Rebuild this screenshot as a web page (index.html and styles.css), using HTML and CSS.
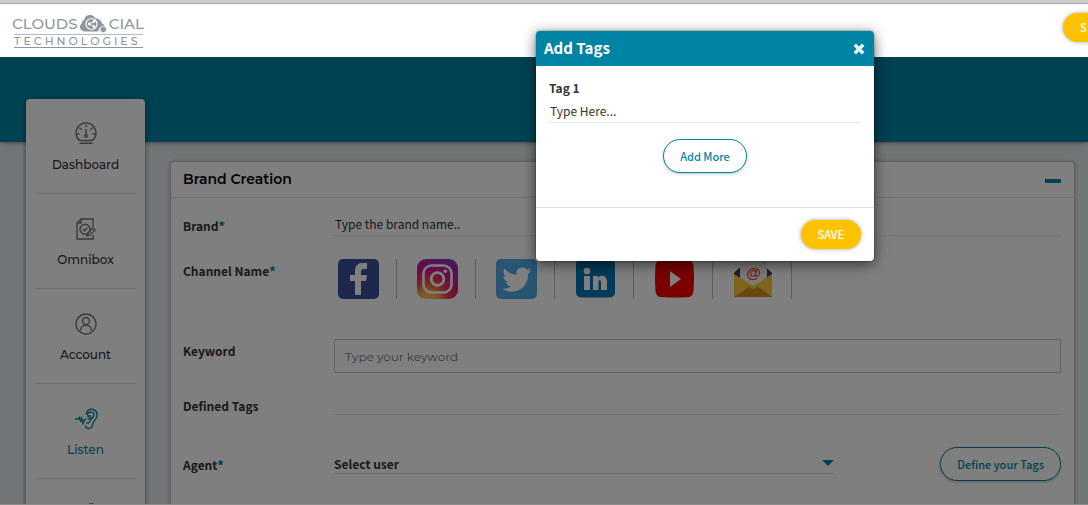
FILE: index.html
```html
<!DOCTYPE html>
<html lang="en">
<head>
<meta charset="utf-8">
<title>Brand Creation</title>
<link rel="stylesheet" href="styles.css">
</head>
<body>
<div class="page">
  <header class="topbar">
    <div class="logo">
      <div class="logo-main">
        <span>CLOUDS</span>
        <svg class="logo-cloud" viewBox="0 0 28 19" aria-hidden="true">
          <path d="M5 17.500A4.600 4.600 0 0 1 2.500 9.500A5 5 0 0 1 5.200 5.500A6 6 0 0 1 16.500 4.500A6 6 0 0 1 23 9.500A4.500 4.500 0 0 1 26 13L21 13.500L19 17.500Z" fill="#8f969d"/>
          <circle cx="12.500" cy="10" r="5.500" fill="#8f969d" stroke="#fff" stroke-width="1.200"/>
          <path d="M15 7.500L10.500 10L15 12.500" fill="none" stroke="#fff"/>
          <circle cx="15" cy="7.400" r="1.300" fill="#fff"/><circle cx="10.300" cy="10" r="1.400" fill="#fff"/><circle cx="15" cy="12.600" r="1.300" fill="#fff"/>
          <circle cx="24.300" cy="15.500" r="3.200" fill="#8f969d" stroke="#fff" stroke-width=".8"/>
        </svg>
        <span>CIAL</span>
      </div>
      <div class="logo-sub">TECHNOLOGIES</div>
    </div>
    <button class="btn btn-gold topbar-btn" type="button">S</button>
  </header>

  <div class="shell">
    <div class="banner"></div>
    <div class="columns">
      <nav class="sidebar">
        <a class="nav-item" href="#">
          <svg viewBox="0 0 22 22" aria-hidden="true"><path d="M4.500 17.500A10 10 0 1 1 17.500 17.500ZM4.500 20.300H17.500M11 1.500V4M1.500 11H4.500M17.500 11H20.500M4.500 4.800L6.500 6.800M17.500 4.800L15.500 6.800M11 6V12"/><circle cx="11" cy="13" r="1.400"/></svg>
          <span>Dashboard</span>
        </a>
        <a class="nav-item" href="#">
          <svg viewBox="0 0 22 22" aria-hidden="true"><path d="M18 9V1H6L2 5V21H18V17M2 5H6V1"/><circle cx="10" cy="11.300" r="5"/><path d="M8 11.300L9.500 12.700L12.300 9.800M12 18L13 15L18 10L20 12L15 17Z"/></svg>
          <span>Omnibox</span>
        </a>
        <a class="nav-item" href="#">
          <svg viewBox="0 0 22 22" aria-hidden="true"><circle cx="11" cy="11" r="10"/><circle cx="11" cy="8" r="3.500"/><path d="M5.500 17.500C5.500 10.500 16.500 10.500 16.500 17.500"/></svg>
          <span>Account</span>
        </a>
        <a class="nav-item active" href="#">
          <svg viewBox="0 0 22 22" aria-hidden="true"><path d="M0 11H3L4.200 9.500L5.500 13L6.500 10L8 15.500L9.500 11.500H11"/><path d="M11 6C12 2.500 14 1.200 16.500 1.200C20.500 1.200 22.500 4.500 22 8C21.500 11.500 18.500 12.500 18 15.500C17.500 18.500 16 20.500 13.500 20.500C11.500 20.500 10.500 19 10.500 17.500"/><path d="M12 7.500C12.500 5 14 4 16 4C18.800 4 19.500 6.500 18.300 9C17.300 11 15 11.500 14.500 13.500C14 15.500 12.500 15.500 11.500 14.500M12.500 9C14 7 16.500 7.500 15.500 9.500C14.500 11 13 10 13 11.500"/></svg>
          <span>Listen</span>
        </a>
        <a class="nav-item" href="#" aria-label="More">
          <svg viewBox="0 0 22 22" aria-hidden="true"><path d="M4 2H9V8H4ZM15 1H18V20H15ZM4 12H9V20H4Z"/></svg>
        </a>
      </nav>

      <main class="card">
        <div class="card-head">
          <h1>Brand Creation</h1>
          <button class="collapse" type="button" aria-label="Collapse"></button>
        </div>
        <form class="form">
          <div class="row row-brand">
            <label for="brand">Brand<b>*</b></label>
            <input class="line-input" id="brand" type="text" placeholder="Type the brand name..">
          </div>
          <div class="row row-channel">
            <span class="label">Channel Name<b>*</b></span>
            <div class="channels">
              <button type="button" aria-label="Facebook"><svg viewBox="0 0 41 40"><rect width="41" height="40" rx="5" fill="#3b5398"/><path d="M17 36V22H12V16H17V12C17 6.500 20 4 25 4H29V10H26C23.500 10 23 11 23 13V16H29L28 22H23V36Z" fill="#fff"/></svg></button>
              <button type="button" aria-label="Instagram"><svg viewBox="0 0 41 40"><defs><radialGradient id="ig" cx=".25" cy="1.050" r="1.150"><stop offset="0" stop-color="#ffd35a"/><stop offset=".22" stop-color="#f9a24b"/><stop offset=".45" stop-color="#ee4050"/><stop offset=".68" stop-color="#d6148a"/><stop offset="1" stop-color="#8a35b8"/></radialGradient></defs><rect width="41" height="40" rx="9" fill="url(#ig)"/><rect x="6.500" y="6.500" width="28" height="27" rx="8" fill="none" stroke="#fff" stroke-width="2.600"/><circle cx="20.500" cy="20" r="6.300" fill="none" stroke="#fff" stroke-width="2.800"/><circle cx="28.300" cy="12.300" r="1.800" fill="#fff"/></svg></button>
              <button type="button" aria-label="Twitter"><svg viewBox="0 0 41 40"><rect width="41" height="40" rx="5" fill="#50abe4"/><path d="M35 11.500C34 12 33 12.300 31.800 12.400C33 11.700 33.900 10.500 34.300 9.200C33.200 9.900 32 10.300 30.700 10.600C27 6.500 19.500 9 20.600 15.800C15.500 15.500 11 13 8.400 9.600C6.800 12.500 7.600 15.800 10.200 17.600C9.200 17.600 8.300 17.300 7.500 16.900C7.500 20 9.600 22.400 12.400 23C11.500 23.300 10.600 23.300 9.700 23.200C10.500 25.600 12.700 27.200 15.300 27.300C12.500 29.400 9.600 30 6.300 29.800C17.500 36.800 32.200 30.500 32.200 15.300V14.500C33.300 13.700 34.300 12.700 35 11.500Z" fill="#fff"/></svg></button>
              <button type="button" aria-label="LinkedIn"><svg viewBox="0 0 41 40"><rect x="1" width="39" height="38.500" rx="5" fill="#0774b3"/><circle cx="12" cy="12" r="3.300" fill="#fff"/><path d="M9 17H15V31H9ZM18 17H23V19C26 15 32 16.500 32 22.500V31H26V23.500C26 20 23.500 20 23.500 23V31H18Z" fill="#fff"/></svg></button>
              <button type="button" aria-label="YouTube"><svg viewBox="0 0 41 40"><path d="M6 1Q20 -1 35 1Q39 2 39.500 7Q40.500 20 39.500 32Q39 37 35 38Q20 39 6 38Q2 37 1.500 32Q.5 20 1.500 7Q2 2 6 1Z" fill="#f40000"/><path d="M16 12V28L27 20Z" fill="#fff"/></svg></button>
              <button type="button" aria-label="Email"><svg viewBox="0 0 41 40"><path d="M1 14L6 9H34L39 14V38H1Z" fill="#34475a"/><path d="M7 1H29L34 5V30H7Z" fill="#f4f4f4"/><path d="M29 1V5H34Z" fill="#ccc"/><text x="20.500" y="19" class="at">@</text><path d="M1 15L20.500 27L39 15V38H1Z" fill="#fbcb38"/><path d="M1 38L16 28L20.500 30L25 28L39 38Z" fill="#d5911f"/></svg></button>
            </div>
          </div>
          <div class="row row-keyword">
            <label for="keyword">Keyword</label>
            <input class="box-input" id="keyword" type="text" placeholder="Type your keyword">
          </div>
          <div class="row row-tags">
            <label for="tags">Defined Tags</label>
            <input class="line-input" id="tags" type="text">
          </div>
          <div class="row row-agent">
            <label for="agent">Agent<b>*</b></label>
            <div class="agent-field">
              <div class="select-wrap">
                <select id="agent"><option>Select user</option></select>
                <svg class="caret" viewBox="0 0 12 6" aria-hidden="true"><path d="M0 0H12L6 6Z" fill="#0084a5"/></svg>
              </div>
              <button class="btn btn-outline" type="button">Define your Tags</button>
            </div>
          </div>
        </form>
      </main>
    </div>
    <div class="backdrop"></div>
  </div>

  <section class="modal" role="dialog" aria-labelledby="modal-title">
    <div class="modal-head">
      <h2 id="modal-title">Add Tags</h2>
      <button class="close" type="button" aria-label="Close"><svg viewBox="0 0 10 10"><path d="M1.500 1.500L8.500 8.500M8.500 1.500L1.500 8.500" stroke="#e9f6f9" stroke-width="2.800"/></svg></button>
    </div>
    <div class="modal-body">
      <label for="tag1">Tag 1</label>
      <input class="line-input" id="tag1" type="text" placeholder="Type Here...">
      <button class="btn btn-outline" type="button">Add More</button>
    </div>
    <div class="modal-foot">
      <button class="btn btn-gold" type="button">SAVE</button>
    </div>
  </section>
</div>
</body>
</html>
```
FILE: styles.css
```css
* { box-sizing: border-box; }

body {
  margin: 0;
  font-family: "Noto Sans CJK SC", "Noto Sans", sans-serif;
  font-size: 12px;
  line-height: 20px;
  color: #333;
}

button, input, select { font: inherit; color: inherit; }
button { border: 0; padding: 0; background: none; cursor: pointer; }
svg { display: block; }

.page {
  position: relative;
  display: flex;
  flex-direction: column;
  height: 100vh;
  overflow: hidden;
  border-bottom: 1px solid #8c8c8c;
  background: #fff;
}

.topbar {
  display: flex;
  justify-content: space-between;
  align-items: flex-start;
  padding: 10px 0 9px 12px;
  border-top: 3px solid #ccc;
  box-shadow: inset 0 1px 0 #aaa;
}

.logo {
  width: 132px;
  font-family: Montserrat, Inter, sans-serif;
  color: #8f969d;
}
.logo-main {
  display: flex;
  align-items: center;
  justify-content: space-between;
  font-size: 15px;
  font-weight: 500;
  line-height: 21px;
}
.logo-cloud { width: 28px; height: 19px; }
.logo-sub {
  margin: 0 1px 0 2px;
  border-top: 1px solid #b5babe;
  border-bottom: 1px solid #8f969d;
  font-size: 11px;
  font-weight: 500;
  line-height: 12px;
  letter-spacing: 3px;
  white-space: nowrap;
}

.btn {
  border-radius: 17px;
  font-size: 11px;
  font-weight: 500;
  line-height: 16px;
  white-space: nowrap;
}
.btn-gold {
  padding: 6px 17px 7px;
  background: #ffc200;
  color: #fff;
  box-shadow: 0 0 4px rgba(0, 0, 0, .35);
}
.btn-outline {
  padding: 8px 16px;
  border: 1px solid #0084a5;
  background: #fff;
  color: #0084a5;
  box-shadow: 0 1px 3px rgba(0, 0, 0, .25);
}
.topbar-btn { width: 61px; margin-right: -36px; text-align: left; }

.shell {
  position: relative;
  flex: 1;
  min-height: 0;
  overflow: hidden;
  background: #e4ebee;
}
.banner {
  height: 85px;
  background: #0084a5;
  box-shadow: 0 1px 4px rgba(0, 0, 0, .4);
}
.columns {
  position: relative;
  display: flex;
  align-items: flex-start;
  gap: 26px;
  margin-top: -43px;
  padding: 0 14px 0 26px;
}
.backdrop { position: absolute; inset: 0; background: rgba(0, 0, 0, .5); }

.sidebar {
  width: 119px;
  padding: 0 9px;
  border-radius: 4px;
  background: #fff;
  box-shadow: 0 1px 5px rgba(0, 0, 0, .5);
}
.nav-item {
  display: flex;
  flex-direction: column;
  align-items: center;
  gap: 10px;
  padding: 24px 0 18px;
  border-bottom: 1px solid #dcdfe1;
  font-family: Montserrat, Inter, sans-serif;
  font-size: 12px;
  font-weight: 500;
  color: #333;
  text-decoration: none;
}
.nav-item svg {
  width: 22px;
  height: 22px;
  overflow: visible;
  fill: none;
  stroke: #777;
  stroke-width: 1.400;
}
.nav-item.active { color: #0084a5; }
.nav-item.active svg { stroke: #0084a5; }

.card {
  flex: 1;
  min-width: 0;
  margin-top: 63px;
  padding-bottom: 60px;
  border-radius: 4px;
  background: #fff;
  box-shadow: 0 0 4px rgba(0, 0, 0, .4);
}
.card-head {
  display: flex;
  align-items: center;
  justify-content: space-between;
  padding: 7px 13px 8px 12px;
  border-bottom: 1px solid #dcdfe1;
}
.card-head h1 {
  margin: 0;
  font-family: Montserrat, Inter, sans-serif;
  font-size: 14px;
  font-weight: 600;
  line-height: 20px;
  color: #000;
}
.collapse { width: 16px; height: 4px; margin-top: 3px; background: #0084a5; }

.form { padding: 16px 13px 0 12px; }
.row {
  display: grid;
  grid-template-columns: 151px minmax(0, 1fr);
  align-items: start;
}
.row label, .label { padding-top: 2px; font-weight: 600; }
.row b { color: #0084a5; }
.row-brand { margin-bottom: 23px; }
.row-channel { margin-bottom: 40px; }
.row-keyword { margin-bottom: 21px; }
.row-tags { margin-bottom: 31px; }
.row-agent { align-items: center; }

.line-input {
  width: 100%;
  height: 22px;
  padding: 0 1px 2px;
  border: 0;
  border-bottom: 1px solid #e4e8ea;
  background: none;
}
.line-input::placeholder { color: #333; opacity: 1; }
.row-tags .line-input { height: 21px; }
.box-input {
  width: 100%;
  height: 34px;
  padding: 0 10px;
  border: 1px solid #ccc;
  background: #fff;
  font-family: Montserrat, Inter, sans-serif;
  font-size: 12px;
}
.box-input::placeholder { color: #777; opacity: 1; }

.channels { display: flex; gap: 20px; padding-left: 4px; }
.channels button { padding-right: 17px; border-right: 1px solid #bbb; }
.channels svg { width: 41px; height: 40px; }
.at {
  font: 700 15px "Liberation Sans", sans-serif;
  text-anchor: middle;
  fill: #e8432e;
}

.agent-field { display: flex; align-items: center; justify-content: space-between; gap: 106px; }
.select-wrap { position: relative; flex: 1; }
.select-wrap select {
  display: block;
  width: 100%;
  height: 20px;
  padding: 0;
  border: 0;
  border-bottom: 1px solid #ccc;
  appearance: none;
  background: none;
  font-weight: 600;
}
.caret { position: absolute; right: 0; top: 6px; width: 12px; height: 6px; pointer-events: none; }

.modal {
  position: absolute;
  top: 31px;
  left: 536px;
  width: 338px;
  border-radius: 4px;
  background: #fff;
  box-shadow: 0 3px 14px rgba(0, 0, 0, .6), 0 0 2px rgba(0, 0, 0, .5);
}
.modal-head {
  display: flex;
  align-items: center;
  justify-content: space-between;
  padding: 7px 9px 8px 8px;
  border-radius: 4px 4px 0 0;
  background: #0084a5;
  color: #fff;
}
.modal-head h2 { margin: 0; font-size: 15px; font-weight: 700; line-height: 20px; }
.close { margin-top: 2px; }
.close svg { width: 12px; height: 12px; }
.modal-body {
  display: flex;
  flex-direction: column;
  align-items: center;
  padding: 12px 13px 34px;
}
.modal-body label { align-self: flex-start; font-weight: 600; }
.modal-body .line-input { margin: 3px 0 16px; }
.modal-foot {
  display: flex;
  justify-content: flex-end;
  padding: 12px 13px;
  border-top: 1px solid #dfe3e5;
}
```
